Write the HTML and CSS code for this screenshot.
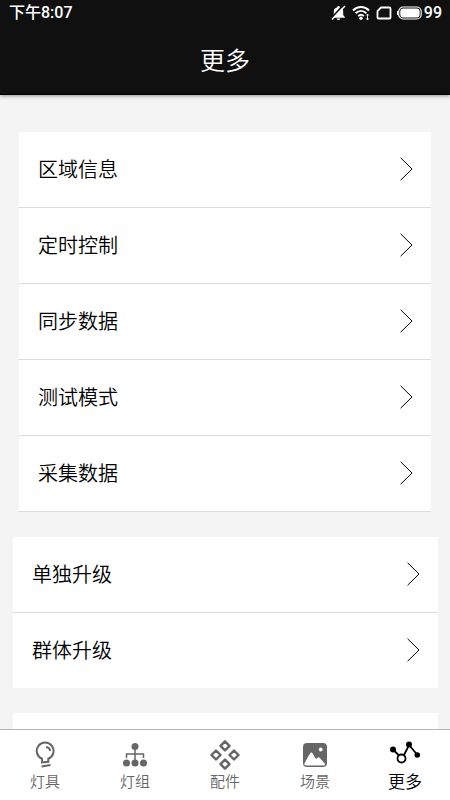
FILE: index.html
```html
<!DOCTYPE html>
<html lang="zh-CN">
<head>
<meta charset="utf-8">
<meta name="viewport" content="width=device-width, initial-scale=1">
<title>更多</title>
<link rel="stylesheet" href="styles.css">
</head>
<body>
<svg class="defs" aria-hidden="true">
  <symbol id="chevron" viewBox="0 0 13 24"><path d="M.6.8 12 12 .6 23.2" fill="none" stroke="currentColor" stroke-width="1"/></symbol>
</svg>
<header class="header">
  <div class="status">
    <span class="time">下午8:07</span>
    <div class="indicators">
      <svg width="15" height="16" viewBox="0 0 15 16"><path d="M7.500 1c.8 0 1.200.5 1.200 1.200 2.300.6 3.500 2.200 3.500 4.300v3.500l1.600 2v.8H1.200V12l1.600-2V6.500c0-2.100 1.200-3.700 3.500-4.300C6.300 1.500 6.700 1 7.500 1zM5.700 13.500h3.600c0 .9-.8 1.500-1.800 1.500s-1.800-.6-1.800-1.500z" fill="#fff"/><path d="M0 13.500 12.500 0" stroke="#101010" stroke-width="1.800"/><path d="M1 14.500 14 1" stroke="#fff" stroke-width="1.500"/></svg>
      <svg class="wifi" width="19" height="16" viewBox="0 0 19 16"><g fill="none" stroke="#fff" stroke-width="2"><path d="M1 5.500C5.500.9 12.500.9 17 5.500M3.600 8.300c3.200-3.100 7.600-3.100 10.800 0M6.200 11c1.700-1.500 3.900-1.500 5.600 0"/></g><circle cx="9" cy="13.300" r="1.700" fill="#fff"/><path d="M15.500 9v6M14.200 10.500l1.300-1.500 1.300 1.500M14.200 13.500l1.300 1.500 1.300-1.500" fill="none" stroke="#fff" stroke-width=".9"/></svg>
      <svg class="sim" width="16" height="14" viewBox="0 0 16 14"><path d="M5 1.500h8.500a1 1 0 0 1 1 1v9a1 1 0 0 1-1 1h-11a1 1 0 0 1-1-1V5z" fill="none" stroke="#fff" stroke-width="1.800"/></svg>
      <svg class="battery" width="25" height="14" viewBox="0 0 25 14"><rect x="1.700" y="1" width="22.500" height="12" rx="4.500" fill="none" stroke="#fff" stroke-width="1.200"/><rect x="3.300" y="2.600" width="19.300" height="8.800" rx="3" fill="#fff"/><path d="M.6 5v4" stroke="#fff" stroke-width="1.200"/></svg>
      <span class="level">99</span>
    </div>
  </div>
  <h1 class="title">更多</h1>
</header>
<main class="content">
  <nav class="card inset">
    <a class="row" href="#area">区域信息<svg class="chevron"><use href="#chevron"/></svg></a>
    <a class="row" href="#timer">定时控制<svg class="chevron"><use href="#chevron"/></svg></a>
    <a class="row" href="#sync">同步数据<svg class="chevron"><use href="#chevron"/></svg></a>
    <a class="row" href="#test">测试模式<svg class="chevron"><use href="#chevron"/></svg></a>
    <a class="row" href="#collect">采集数据<svg class="chevron"><use href="#chevron"/></svg></a>
  </nav>
  <nav class="card wide">
    <a class="row" href="#single">单独升级<svg class="chevron"><use href="#chevron"/></svg></a>
    <a class="row" href="#group">群体升级<svg class="chevron"><use href="#chevron"/></svg></a>
  </nav>
  <div class="card wide next"></div>
</main>
<nav class="tabs">
  <a class="tab" href="#lamps">
    <svg width="32" height="32" viewBox="0 0 32 32"><g fill="none" stroke="currentColor" stroke-width="2"><path d="M13 22.300v-2.600a8.400 8.400 0 1 1 6.300 0v3.100L12 23.600M12.500 27.600l9-1.500"/><path d="M17 8c2.300.2 3.800 1.500 4.200 4"/></g></svg>
    <span>灯具</span>
  </a>
  <a class="tab" href="#groups">
    <svg width="32" height="32" viewBox="0 0 32 32"><g fill="currentColor"><circle cx="16" cy="7.500" r="3.500"/><circle cx="7.500" cy="24" r="3.500"/><circle cx="16" cy="24" r="3.500"/><circle cx="24.500" cy="24" r="3.500"/></g><path d="M16 8v15M7.500 19v-4h17v4" fill="none" stroke="currentColor" stroke-width="1.500"/></svg>
    <span>灯组</span>
  </a>
  <a class="tab" href="#parts">
    <svg width="32" height="32" viewBox="0 0 32 32"><g fill="none" stroke="currentColor" stroke-width="2.400" stroke-linejoin="round"><path d="m16 2.300 4.500 4.500-4.500 4.500-4.500-4.500zM7 11.500l4.500 4.500L7 20.500 2.500 16zM25 11.500l4.500 4.500-4.500 4.500-4.500-4.500zM16 20.600l4.500 4.500-4.500 4.500-4.500-4.500z"/></g></svg>
    <span>配件</span>
  </a>
  <a class="tab" href="#scenes">
    <svg width="32" height="32" viewBox="0 0 32 32"><rect x="4" y="4" width="24" height="24" rx="4" fill="currentColor"/><path d="M5.500 24.500c2-3.800 4.300-8.500 6-10.500 1-.9 1.700-.3 2.300.8l2.400 4.200c.6 1 1 1 1.800.2 1.300-1.300 2-1.200 3 0l4.800 5.300c.6 1.200.2 1.900-1 1.900H7c-1.300 0-2-.7-1.500-1.900z" fill="#fff"/><circle cx="21.700" cy="10.500" r="1.900" fill="#fff"/></svg>
    <span>场景</span>
  </a>
  <a class="tab active" href="#more" aria-current="page">
    <svg width="32" height="32" viewBox="0 0 32 32"><path d="m4 10.500 6 6M14.500 17l5.500-11 8.500 10" fill="none" stroke="currentColor" stroke-width="1.800"/><g fill="currentColor"><circle cx="4" cy="10.500" r="3"/><circle cx="20" cy="5.500" r="3"/><circle cx="28.300" cy="16" r="2.800"/></g><circle cx="12.500" cy="19.500" r="4" fill="#fff" stroke="currentColor" stroke-width="1.800"/></svg>
    <span>更多</span>
  </a>
</nav>
</body>
</html>
```
FILE: styles.css
```css
* {
  box-sizing: border-box;
}

body {
  margin: 0;
  height: 100vh;
  display: flex;
  flex-direction: column;
  overflow: hidden;
  background: #f4f4f4;
  color: #000;
  font-family: "Noto Sans CJK SC", sans-serif;
  font-weight: 350;
}

a {
  color: inherit;
  text-decoration: none;
}

svg {
  flex: none;
}

.defs {
  position: absolute;
  width: 0;
  height: 0;
}

.header {
  flex: none;
  background: #101010;
  color: #fff;
  border-bottom: 1px solid #000;
  box-shadow: 0 1px 4px rgba(0, 0, 0, 0.4);
}

.status {
  display: flex;
  align-items: center;
  justify-content: space-between;
  height: 25px;
  padding: 0 8px 0 9px;
  font-family: Roboto, "Noto Sans CJK SC", sans-serif;
  font-size: 16px;
  font-weight: 500;
  line-height: 25px;
}

.indicators {
  display: flex;
  align-items: center;
}

.wifi {
  margin-left: 6px;
}

.sim {
  margin-left: 5px;
}

.battery {
  margin: 0 2px 0 5px;
}

.title {
  margin: 0;
  padding: 16px 0 17px;
  font-size: 25px;
  font-weight: 350;
  line-height: 36px;
  text-align: center;
}

.content {
  flex: 1;
  min-height: 0;
  display: flex;
  flex-direction: column;
  gap: 25px;
  padding-top: 37px;
  overflow: hidden;
}

.card {
  flex: none;
  background: #fff;
}

.inset {
  margin: 0 19px;
}

.wide {
  margin: 0 12px 0 13px;
}

.next {
  height: 76px;
}

.row {
  display: flex;
  align-items: center;
  justify-content: space-between;
  padding: 24px 18px 25px 19px;
  border-bottom: 1px solid #dcdcdc;
  font-size: 20px;
  line-height: 26px;
}

.wide .row:last-child {
  border-bottom: 0;
}

.chevron {
  width: 13px;
  height: 24px;
}

.tabs {
  flex: none;
  display: grid;
  grid-template-columns: repeat(5, 1fr);
  height: 71px;
  padding-top: 9px;
  background: #fff;
  border-top: 1px solid #b4b4b4;
}

.tab {
  display: flex;
  flex-direction: column;
  align-items: center;
  color: #666;
  font-size: 15px;
  line-height: 20px;
}

.active {
  color: #000;
  font-size: 17px;
}
```
